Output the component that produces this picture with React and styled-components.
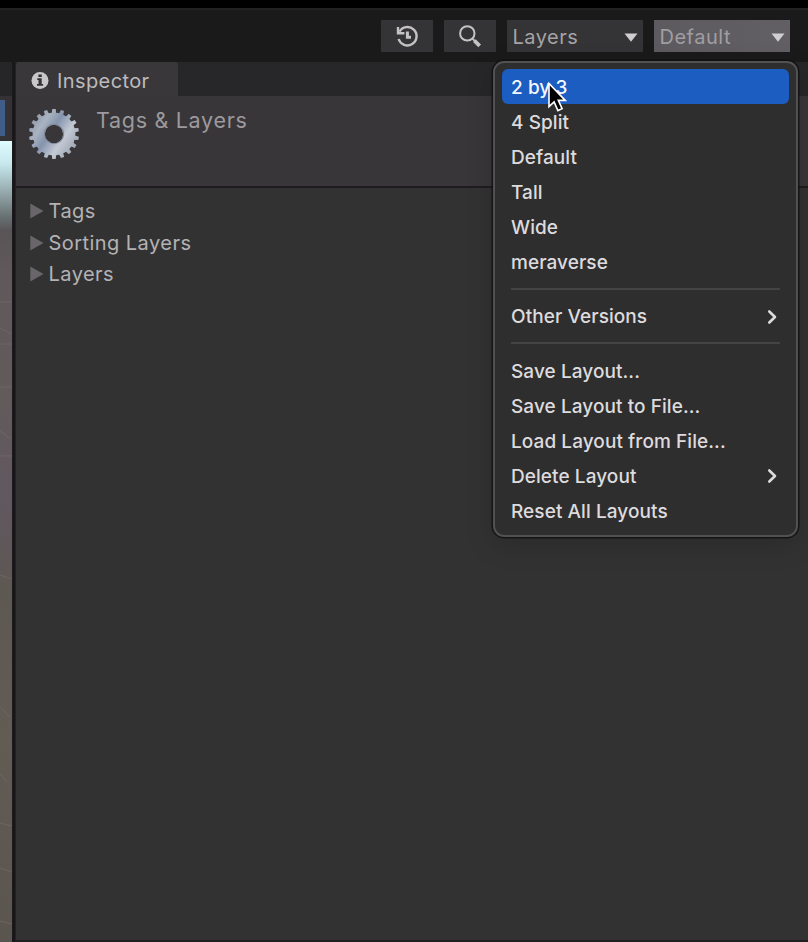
import React from "react";
import styled, { createGlobalStyle } from "styled-components";

const Global = createGlobalStyle`
  * { box-sizing: border-box; }
  body { margin: 0; background: #333233; font-family: Inter, sans-serif; overflow: hidden; }
`;
const Screen = styled.div`
  position: relative;
  width: 808px;
  height: 942px;
  display: flex;
  flex-direction: column;
  border-top: 8px solid #000;
  background: #1b1a1b;
`;
const Toolbar = styled.header`
  height: 54px;
  flex: none;
  display: flex;
  align-items: flex-start;
  justify-content: flex-end;
  gap: 11px;
  padding: 10px 18px 0 0;
  border-top: 2px solid #222122;
`;
const ToolButton = styled.div`
  width: 52px;
  height: 32px;
  display: flex;
  align-items: center;
  justify-content: center;
  background: #343335;
`;
const Dropdown = styled.div`
  width: 136px;
  height: 32px;
  display: flex;
  align-items: center;
  justify-content: space-between;
  padding: 2px 5px 0 5.5px;
  color: ${(p) => (p.$active ? "#a09ea2" : "#a5a3a6")};
  background: ${(p) => (p.$active ? "linear-gradient(90deg, #5d5b5f, #625f64)" : "#343335")};
  font-size: 20px;
  letter-spacing: 0.5px;
`;
const Main = styled.div`
  flex: 1;
  display: flex;
  min-height: 0;
`;
const ScenePane = styled.div`
  width: 12px;
  display: flex;
  flex-direction: column;
  background: #262527;
`;
const SceneTools = styled.div`
  margin-top: 34px;
  height: 45px;
  padding-top: 4px;
  background: #343234;
`;
const ActiveTool = styled.div`
  width: 5px;
  height: 36px;
  background: #405d88;
`;
const SceneView = styled.div`
  flex: 1;
  overflow: hidden;
  background: linear-gradient(180deg, #dffcff 0, #c7e9ee 22px, #9bb0b4 48px, #687071 76px, #595456 90px, #60585a 130px, #625a5b 260px, #625860 350px, #60575b 400px, #5e5852 450px, #625c55 600px, #5b554f 801px);
`;
const Divider = styled.div`
  width: 4px;
  background: linear-gradient(90deg, #1c1a1c, #171518 60%, #2a272a);
`;
const Inspector = styled.section`
  flex: 1;
  display: flex;
  flex-direction: column;
  background: #333233;
  border-bottom: 2px solid #211f22;
`;
const TabStrip = styled.div`
  height: 34px;
  flex: none;
  background: #272628;
`;
const Tab = styled.div`
  width: 162px;
  height: 34px;
  display: flex;
  align-items: center;
  gap: 8.5px;
  padding: 4px 0 0 14.5px;
  border-radius: 3px 3px 0 0;
  background: #39373a;
  color: #bdbbbe;
  font-size: 20px;
  letter-spacing: 0.4px;
`;
const Header = styled.div`
  height: 92px;
  flex: none;
  display: flex;
  align-items: flex-start;
  gap: 16px;
  padding: 12px 0 0 12px;
  background: #383638;
  border-bottom: 2px solid #1e1c1f;
`;
const Title = styled.div`
  color: #9c9a9e;
  font-size: 21.5px;
  line-height: 24px;
  letter-spacing: 0.7px;
`;
const Foldouts = styled.div`
  display: flex;
  flex-direction: column;
  padding: 7.5px 0 0 13.5px;
`;
const Foldout = styled.div`
  height: 31.5px;
  display: flex;
  align-items: center;
  gap: 5px;
  color: #b4b2b5;
  font-size: 20px;
  letter-spacing: 0.45px;
`;
const Menu = styled.div`
  position: absolute;
  left: 493px;
  top: 53px;
  width: 305px;
  height: 476px;
  padding: 6px 7px;
  border: 2px solid #535053;
  border-radius: 11px;
  background: #2f2e2f;
  box-shadow: 0 0 0 1.5px rgba(15, 13, 15, 0.75), 0 8px 28px rgba(0, 0, 0, 0.16);
`;
const MenuItem = styled.div`
  height: 35px;
  display: flex;
  align-items: center;
  justify-content: space-between;
  padding: 2px 12px 0 9px;
  border-radius: 6px;
  color: ${(p) => (p.$selected ? "#f4f7ff" : "#dddbdd")};
  background: ${(p) => (p.$selected ? "#1b5dc0" : "transparent")};
  font-size: 19px;
  font-weight: 500;
  letter-spacing: 0.07px;
  white-space: pre;
`;
const Separator = styled.div`
  height: 2px;
  margin: 9px 9px 8.3px 9px;
  background: #454346;
`;
const Pointer = styled.svg`
  position: absolute;
  left: 547px;
  top: 73px;
`;

const Caret = () => (
  <svg width="14" height="9" viewBox="0 0 14 9"><path d="M0.5 0.5h13L7 8.8z" fill="#d0ced1" /></svg>
);
const Triangle = () => (
  <svg width="14" height="16" viewBox="0 0 14 16"><path d="M0.3 0.5v15L13.5 8z" fill="#69666b" /></svg>
);
const Chevron = () => (
  <svg width="10" height="16" viewBox="0 0 10 16"><path d="M2.3 2.5L8 8l-5.7 5.5" fill="none" stroke="#dddbdd" strokeWidth="2.6" strokeLinecap="round" strokeLinejoin="round" /></svg>
);
const HistoryIcon = () => (
  <svg width="24" height="24" viewBox="0 0 24 24" fill="none" stroke="#c4c2c5" strokeWidth="2.4">
    <path d="M4.4 7.6A9.2 9.2 0 1 1 3.6 15" />
    <path d="M3 3v6.2h6.4" />
    <path d="M12.4 7.5v5.7h3.6" strokeWidth="3" />
  </svg>
);
const SearchIcon = () => (
  <svg width="24" height="24" viewBox="0 0 24 24" fill="none" stroke="#c4c2c5">
    <circle cx="9.3" cy="9.4" r="7.2" strokeWidth="2" />
    <path d="M14.2 14.4l2.7 2.7" strokeWidth="2" />
    <path d="M16.4 16.7l5.3 5.2" strokeWidth="3.8" />
  </svg>
);
const InfoIcon = () => (
  <svg width="18" height="18" viewBox="0 0 18 18">
    <circle cx="9" cy="8.5" r="8.5" fill="#c9c7ca" />
    <path d="M7.4 2.6h3.4v2.5H7.4zM6.3 6.3h4.4v5.7h1.4v1.8H6V12h1.5V8H6.3z" fill="#343235" />
  </svg>
);
const TEETH = Array.from({ length: 18 }, (_, i) => i * 20);
const GearIcon = () => (
  <svg width="52" height="52" viewBox="0 0 51 51">
    <defs>
      <linearGradient id="steel" x1="3" y1="12" x2="47" y2="42" gradientUnits="userSpaceOnUse">
        <stop offset="0" stopColor="#8e98a8" />
        <stop offset="0.22" stopColor="#a9b3c1" />
        <stop offset="0.42" stopColor="#8594ad" />
        <stop offset="0.68" stopColor="#c3c9d4" />
        <stop offset="1" stopColor="#99a2b1" />
      </linearGradient>
      <mask id="gearHole">
        <circle cx="25.5" cy="25.5" r="21" fill="#fff" />
        {TEETH.map((a) => (
          <path key={a} d="M23.3 6l.5-5h3.4l.5 5z" fill="#fff" transform={`rotate(${a} 25.5 25.5)`} />
        ))}
        <circle cx="25.5" cy="25.5" r="9" fill="#000" />
      </mask>
    </defs>
    <rect width="51" height="51" fill="url(#steel)" mask="url(#gearHole)" />
    <circle cx="25.5" cy="25.5" r="9.5" fill="none" stroke="#7f8897" />
  </svg>
);
const Streaks = () => (
  <svg width="12" height="801" viewBox="0 0 12 801" fill="none" stroke="#766d6b" strokeWidth="1" opacity="0.6">
    <path d="M0 161h12M0 187l12 6M0 203h12M0 246h12M0 290l11 8M0 315h12M0 434l12 4M0 566l10 10M0 633l7 8M0 682l12 3M0 727l12 4M0 780l12 3" />
  </svg>
);

const SECTIONS = ["Tags", "Sorting Layers", "Layers"];
const MENU_GROUPS = [
  [{ label: "2 by 3", selected: true }, { label: "4 Split" }, { label: "Default" }, { label: "Tall" }, { label: "Wide" }, { label: "meraverse" }],
  [{ label: "Other Versions", submenu: true }],
  [{ label: "Save Layout..." }, { label: "Save Layout to File..." }, { label: "Load Layout from File..." }, { label: "Delete Layout", submenu: true }, { label: "Reset All Layouts" }],
];

export default function App() {
  return (
    <>
      <Global />
      <Screen>
        <Toolbar>
          <ToolButton><HistoryIcon /></ToolButton>
          <ToolButton><SearchIcon /></ToolButton>
          <Dropdown>Layers<Caret /></Dropdown>
          <Dropdown $active>Default<Caret /></Dropdown>
        </Toolbar>
        <Main>
          <ScenePane>
            <SceneTools><ActiveTool /></SceneTools>
            <SceneView><Streaks /></SceneView>
          </ScenePane>
          <Divider />
          <Inspector>
            <TabStrip><Tab><InfoIcon />Inspector</Tab></TabStrip>
            <Header><GearIcon /><Title>Tags &amp; Layers</Title></Header>
            <Foldouts>
              {SECTIONS.map((name) => <Foldout key={name}><Triangle />{name}</Foldout>)}
            </Foldouts>
          </Inspector>
        </Main>
        <Menu>
          {MENU_GROUPS.map((group, i) => (
            <React.Fragment key={i}>
              {i > 0 && <Separator />}
              {group.map((item) => (
                <MenuItem key={item.label} $selected={item.selected}>
                  {item.label}{item.submenu && <Chevron />}
                </MenuItem>
              ))}
            </React.Fragment>
          ))}
        </Menu>
        <Pointer width="20" height="32" viewBox="0 0 20 32">
          <path d="M2 2.5v23.2l5.1-4.8 3.8 8.7 4.2-1.9-3.8-8.3h6.9z" fill="#000" stroke="#fff" strokeWidth="1.6" />
        </Pointer>
      </Screen>
    </>
  );
}
